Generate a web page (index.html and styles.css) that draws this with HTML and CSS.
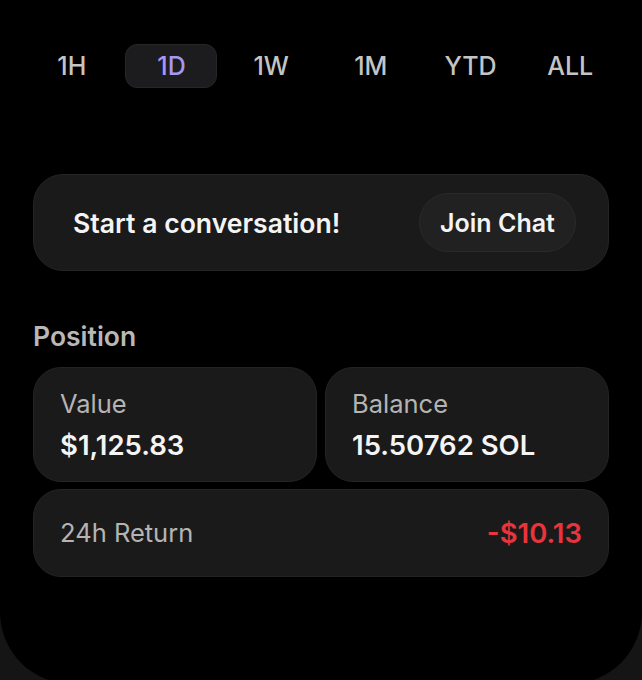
FILE: index.html
```html
<!DOCTYPE html>
<html lang="en">
<head>
    <meta charset="UTF-8">
    <meta name="viewport" content="width=device-width, initial-scale=1.0">
    <title>Token</title>
    <link rel="stylesheet" href="styles.css">
</head>
<body>
    <div class="sheet">
        <div class="ranges">
            <button type="button" class="range">1H</button>
            <button type="button" class="range active">1D</button>
            <button type="button" class="range">1W</button>
            <button type="button" class="range">1M</button>
            <button type="button" class="range">YTD</button>
            <button type="button" class="range">ALL</button>
        </div>

        <div class="chatCard">
            <span class="chatText">Start a conversation!</span>
            <button type="button" class="joinBtn">Join Chat</button>
        </div>

        <h2 class="sectionTitle">Position</h2>
        <div class="position">
            <div class="card">
                <div class="label">Value</div>
                <div class="amount">$1,125.83</div>
            </div>
            <div class="card">
                <div class="label">Balance</div>
                <div class="amount">15.50762 SOL</div>
            </div>
            <div class="card wide">
                <div class="label">24h Return</div>
                <div class="amount neg">-$10.13</div>
            </div>
        </div>
    </div>
</body>
</html>
```

FILE: styles.css
```css
*{
    box-sizing: border-box;
}
body{
    margin: 0;
    background-color: #151515;
    font-family: Inter, "Noto Sans", sans-serif;
    color: #f2f2f2;
    overflow: hidden;
}
.sheet{
    background-color: #000;
    height: 684px;
    border-radius: 0 0 72px 72px;
    padding: 44px 33px 0;
}
.ranges{
    display: grid;
    grid-template-columns: repeat(6, 1fr);
    justify-items: center;
    margin: 0 -11px;
}
.range{
    width: 92px;
    height: 44px;
    border: 1px solid transparent;
    border-radius: 12px;
    background: none;
    color: #c4c4c4;
    font-family: inherit;
    font-size: 25px;
    font-weight: 500;
    padding: 0;
}
.range.active{
    background-color: #1c1c1e;
    border-color: #262628;
    color: #a597f2;
}
.chatCard{
    margin-top: 86px;
    height: 97px;
    display: flex;
    align-items: center;
    justify-content: space-between;
    padding: 0 32px 0 39px;
    background-color: #1a1a1a;
    border: 1px solid #242424;
    border-radius: 30px;
}
.chatText{
    font-size: 26.6px;
    font-weight: 600;
    color: #f4f4f4;
}
.joinBtn{
    width: 157px;
    height: 59px;
    border-radius: 30px;
    border: 1px solid #2a2a2a;
    background-color: #212121;
    color: #f4f4f4;
    font-family: inherit;
    font-size: 25px;
    font-weight: 600;
    padding: 0;
}
.sectionTitle{
    margin: 50px 0 16px;
    font-size: 26.5px;
    line-height: 30px;
    font-weight: 600;
    color: #b8b8b8;
}
.position{
    display: grid;
    grid-template-columns: 1fr 1fr;
    column-gap: 8px;
    row-gap: 7px;
}
.card{
    background-color: #1a1a1a;
    border: 1px solid #242424;
    border-radius: 28px;
    padding: 22px 26px 21px;
}
.label{
    font-size: 25.5px;
    line-height: 28px;
    color: #b4b4b4;
}
.amount{
    margin-top: 12px;
    font-size: 27.5px;
    line-height: 30px;
    font-weight: 600;
    color: #f4f4f4;
}
.card.wide{
    grid-column: span 2;
    height: 88px;
    padding: 0 26px;
    display: flex;
    align-items: center;
    justify-content: space-between;
}
.card.wide .amount{
    margin-top: 0;
}
.amount.neg{
    color: #e8343a;
}
```
